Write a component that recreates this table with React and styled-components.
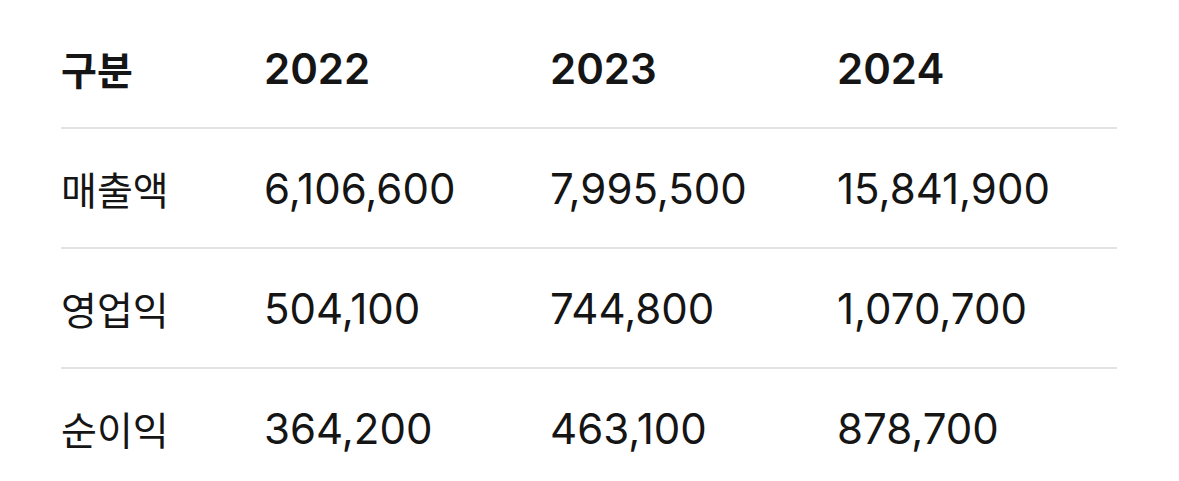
import React from "react";
import styled, { createGlobalStyle } from "styled-components";

const GlobalStyle = createGlobalStyle`
  body {
    margin: 0;
    background: #ffffff;
    font-family: Inter, "Noto Sans CJK KR", sans-serif;
    color: #151515;
  }
`;

const Wrapper = styled.div`
  padding: 9px 0 0 61px;
`;

const Table = styled.div`
  width: 1056px;
`;

const Row = styled.div`
  display: grid;
  grid-template-columns: 204px 286px 287px 1fr;
  align-items: center;
  height: 118px;
  border-bottom: ${(p) => (p.last ? "none" : "2px solid #e3e3e3")};
`;

const Cell = styled.div`
  font-size: ${(p) => (p.label ? "39px" : "42px")};
  font-weight: ${(p) => (p.head ? 600 : 400)};
  margin-left: ${(p) => (p.label ? "0" : "-1px")};
  white-space: nowrap;
`;

const years = ["2022", "2023", "2024"];

const rows = [
  { label: "매출액", values: ["6,106,600", "7,995,500", "15,841,900"] },
  { label: "영업익", values: ["504,100", "744,800", "1,070,700"] },
  { label: "순이익", values: ["364,200", "463,100", "878,700"] },
];

const App = () => {
  return (
    <Wrapper>
      <GlobalStyle />
      <Table>
        <Row>
          <Cell head label>
            구분
          </Cell>
          {years.map((y) => (
            <Cell head key={y}>
              {y}
            </Cell>
          ))}
        </Row>
        {rows.map((r, i) => (
          <Row key={r.label} last={i === rows.length - 1}>
            <Cell label>{r.label}</Cell>
            {r.values.map((v) => (
              <Cell key={v}>{v}</Cell>
            ))}
          </Row>
        ))}
      </Table>
    </Wrapper>
  );
};

export default App;
